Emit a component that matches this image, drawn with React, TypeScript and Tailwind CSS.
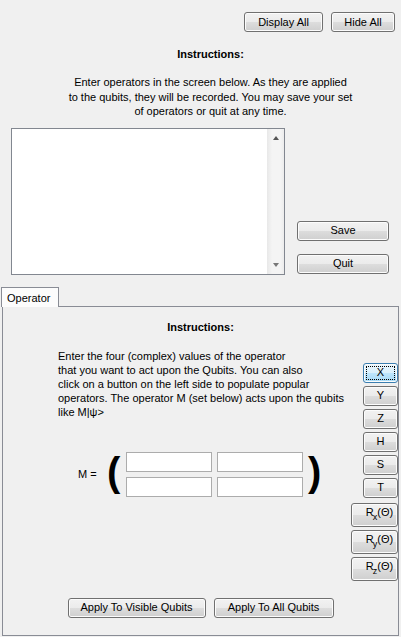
import type { ReactNode } from 'react';

const btnBase =
  'relative flex items-center justify-center rounded-[3px] border border-[#707070] bg-[linear-gradient(#f2f2f2_0%,#ebebeb_50%,#dddddd_50%,#cfcfcf_100%)] shadow-[inset_0_0_0_1px_#fcfcfc] text-black leading-none';

const btnFocus =
  'relative flex items-center justify-center rounded-[3px] border border-[#3c7fb1] bg-[linear-gradient(#eaf6fd_0%,#d9f0fc_50%,#bee6fd_50%,#a7d9f5_100%)] shadow-[inset_0_0_0_1px_#fcfcfc] text-black leading-none';

interface BtnProps {
  className?: string;
  focused?: boolean;
  children: ReactNode;
}

function Btn({ className = '', focused = false, children }: BtnProps) {
  return (
    <button type="button" className={`${focused ? btnFocus : btnBase} ${className}`}>
      {focused && <span className="absolute inset-[2px] border border-dotted border-black" />}
      <span className="relative">{children}</span>
    </button>
  );
}

function Rot({ axis }: { axis: string }) {
  return (
    <span className="flex items-start pl-[10px]">
      R<span className="text-[9px] mt-[6px] -ml-[1px]">{axis}</span>(Θ)
    </span>
  );
}

export default function App() {
  const gates = ['X', 'Y', 'Z', 'H', 'S', 'T'];

  return (
    <div className="w-[401px] h-[637px] bg-[#f0f0f0] flex flex-col overflow-hidden text-[11px] text-black font-['Liberation_Sans',Arial,sans-serif]">
      <div className="flex justify-end gap-[8px] pt-[12px] pr-[6px]">
        <Btn className="w-[79px] h-[20px]">Display All</Btn>
        <Btn className="w-[64px] h-[20px]">Hide All</Btn>
      </div>

      <div className="pl-[20px] text-center">
        <p className="mt-[15px] font-bold leading-[14px]">Instructions:</p>
        <p className="mt-[14px] leading-[14.5px]">
          Enter operators in the screen below. As they are applied
          <br />
          to the qubits, they will be recorded. You may save your set
          <br />
          of operators or quit at any time.
        </p>
      </div>

      <div className="flex items-end pl-[11px] mt-[9px]">
        <div className="w-[274px] h-[147px] border border-[#828790] bg-white flex justify-end">
          <div className="w-[17px] h-full bg-[linear-gradient(90deg,#e8e8e8,#f4f4f4_30%,#f4f4f4_80%,#ececec)] flex flex-col items-center justify-between py-[7px]">
            <span className="w-0 h-0 border-x-[3.5px] border-x-transparent border-b-[4px] border-b-[#555]" />
            <span className="w-0 h-0 border-x-[3.5px] border-x-transparent border-t-[4px] border-t-[#777]" />
          </div>
        </div>
        <div className="ml-[12px] flex flex-col gap-[13px] pb-[1px]">
          <Btn className="w-[92px] h-[20px]">Save</Btn>
          <Btn className="w-[92px] h-[20px]">Quit</Btn>
        </div>
      </div>

      <div className="mt-[12px] ml-[1px] w-[58px] h-[20px] -mb-[1px] relative z-10 border border-b-0 border-[#898c95] bg-[#fcfcfc] pl-[5px] pt-[3px] leading-[14px]">
        Operator
      </div>

      <div className="ml-[2px] w-[397px] h-[330px] border border-[#898c95] bg-[#f0f0f0] flex flex-col">
        <p className="pt-[13px] text-center font-bold leading-[14px]">Instructions:</p>

        <div className="flex mt-[15px]">
          <div className="flex-1 pl-[55px]">
            <p className="leading-[14px]">
              Enter the four (complex) values of the operator
              <br />
              that you want to act upon the Qubits. You can also
              <br />
              click on a button on the left side to populate popular
              <br />
              operators. The operator M (set below) acts upon the qubits
              <br />
              like M|ψ&gt;
            </p>

            <div className="flex items-center mt-[33px] ml-[20px]">
              <span className="w-[29px]">M =</span>
              <span className="w-[19px] text-[40px] font-bold leading-none -mt-[4px]">(</span>
              <div className="grid grid-cols-2 gap-x-[5px] gap-y-[5px]">
                <div className="w-[86px] h-[20px] border border-[#acacac] bg-white" />
                <div className="w-[86px] h-[20px] border border-[#acacac] bg-white" />
                <div className="w-[86px] h-[20px] border border-[#acacac] bg-white" />
                <div className="w-[86px] h-[20px] border border-[#acacac] bg-white" />
              </div>
              <span className="ml-[5px] text-[40px] font-bold leading-none -mt-[4px]">)</span>
            </div>
          </div>

          <div className="w-[47px] mt-[14px] flex flex-col items-end gap-[3px]">
            {gates.map((g, i) => (
              <Btn key={g} focused={i === 0} className="w-[35px] h-[20px]">
                {g}
              </Btn>
            ))}
            <div className="flex flex-col gap-[3px] mt-[2px]">
              {['x', 'y', 'z'].map((a) => (
                <Btn key={a} className="w-[47px] h-[24px]">
                  <Rot axis={a} />
                </Btn>
              ))}
            </div>
          </div>
        </div>

        <div className="mt-auto mb-[17px] flex justify-center gap-[8px]">
          <Btn className="w-[138px] h-[20px]">Apply To Visible Qubits</Btn>
          <Btn className="w-[120px] h-[20px]">Apply To All Qubits</Btn>
        </div>
      </div>
    </div>
  );
}
